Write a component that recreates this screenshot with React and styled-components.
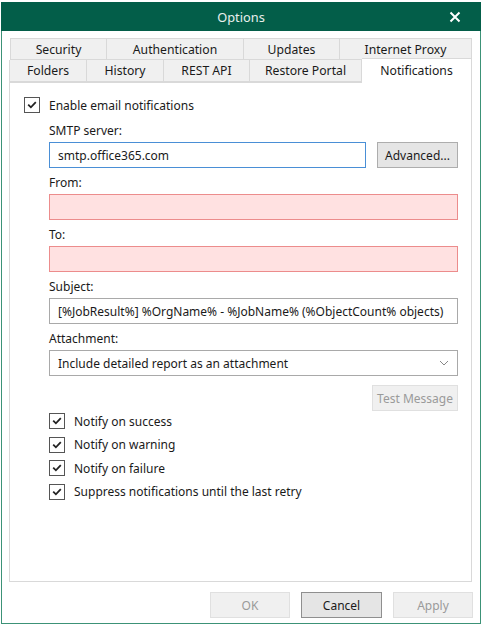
import React from 'react';
import styled, { createGlobalStyle } from 'styled-components';

const Global = createGlobalStyle`
  html, body { margin: 0; padding: 0; background: #fff; }
  body {
    font-family: "Noto Sans", "Open Sans", sans-serif;
    font-size: 12px;
    color: #1a1a1a;
  }
  * { box-sizing: border-box; }
`;

const Window = styled.div`
  margin: 2px 0 0 1px;
  width: 480px;
  height: 622px;
  border: 1px solid #3c9277;
  border-top: none;
  display: flex;
  flex-direction: column;
  background: #fff;
`;

const TitleBar = styled.div`
  height: 29px;
  margin: 0 -1px;
  background: #035e49;
  display: grid;
  grid-template-columns: 1fr auto 1fr;
  align-items: center;
  color: #e9efed;
  font-size: 12.8px;
`;

const Title = styled.div`
  grid-column: 2;
`;

const Close = styled.div`
  grid-column: 3;
  justify-self: end;
  margin-right: 20px;
  display: flex;
  align-items: center;
`;

const Body = styled.div`
  padding: 7px 7px 0 7px;
  display: flex;
  flex-direction: column;
`;

const TabRow = styled.div`
  display: flex;
  height: 22px;
  margin-left: ${p => p.$indent || 0}px;
`;

const Tab = styled.div`
  width: ${p => p.$w}px;
  height: 22px;
  background: #f0f0f0;
  border: 1px solid #d9d9d9;
  border-left: ${p => (p.$first ? '1px solid #d9d9d9' : 'none')};
  border-top: ${p => (p.$noTop ? 'none' : '1px solid #d9d9d9')};
  display: flex;
  align-items: center;
  justify-content: center;
  font-size: 12.2px;
  color: #1a1a1a;
  white-space: nowrap;
`;

const ActiveTab = styled(Tab)`
  position: relative;
  z-index: 1;
  background: #fff;
  height: 25px;
  margin-top: -2px;
  border-top: 1px solid #d9d9d9;
  border-bottom: none;
  padding-bottom: 2px;
`;

const Panel = styled.div`
  width: 463px;
  height: 500px;
  border: 1px solid #d9d9d9;
  padding: 14px 13px 0 14px;
  display: flex;
  flex-direction: column;
`;

const CheckRow = styled.label`
  display: flex;
  align-items: center;
  height: 16px;
  gap: 9px;
  font-size: 12px;
  white-space: nowrap;
`;

const Box = styled.span`
  width: 16px;
  height: 16px;
  border: 1px solid #555;
  background: #fff;
  display: flex;
  align-items: center;
  justify-content: center;
  flex: none;
`;

const Fields = styled.div`
  margin-top: 3px;
  padding-left: 25px;
  display: flex;
  flex-direction: column;
`;

const Label = styled.div`
  height: 26px;
  padding-top: 7px;
  line-height: 16px;
  font-size: 12px;
`;

const Input = styled.div`
  flex: none;
  height: 26px;
  padding: 0 0 0 8px;
  display: flex;
  align-items: center;
  font-size: 12px;
  white-space: nowrap;
  overflow: hidden;
  background: ${p => (p.$error ? '#ffe1e1' : '#fff')};
  border: 1px solid
    ${p => (p.$focus ? '#4a8fd6' : p.$error ? '#ec8c8c' : '#a9a9a9')};
`;

const InputRow = styled.div`
  display: flex;
  gap: 11px;
  & > ${Input} {
    flex: 1;
  }
`;

const Select = styled(Input)`
  justify-content: space-between;
  padding-right: 8px;
`;

const Button = styled.div`
  flex: none;
  width: ${p => p.$w}px;
  height: 26px;
  display: flex;
  align-items: center;
  justify-content: center;
  font-size: 12px;
  white-space: nowrap;
  background: ${p => (p.$disabled ? '#f0f0f0' : '#e5e5e5')};
  color: ${p => (p.$disabled ? '#9a9a9a' : '#1a1a1a')};
  border: 1px solid ${p => (p.$disabled ? '#e0e0e0' : p.$default ? '#8f8f8f' : '#adadad')};
`;

const TestRow = styled.div`
  display: flex;
  justify-content: flex-end;
  margin-top: 9px;
`;

const Checks = styled.div`
  margin-top: 2px;
  display: flex;
  flex-direction: column;
  gap: 7.67px;
`;

const ButtonBar = styled.div`
  display: flex;
  justify-content: flex-end;
  gap: 11px;
  margin-top: 10px;
`;

const Check = () => (
  <svg width="12" height="12" viewBox="0 0 12 12">
    <path d="M2.2 5.6 L4.9 8.3 L9.8 3.2" fill="none" stroke="#222" strokeWidth="1.8" />
  </svg>
);

const CheckItem = ({ children }) => (
  <CheckRow>
    <Box>
      <Check />
    </Box>
    {children}
  </CheckRow>
);

export default function App() {
  return (
    <>
      <Global />
      <Window>
        <TitleBar>
          <Title>Options</Title>
          <Close>
            <svg width="12" height="12" viewBox="0 0 12 12">
              <path d="M1.5 1.5 L10.5 10.5 M10.5 1.5 L1.5 10.5" stroke="#fff" strokeWidth="2" />
            </svg>
          </Close>
        </TitleBar>
        <Body>
          <TabRow $indent={1}>
            <Tab $w={97} $first>Security</Tab>
            <Tab $w={137}>Authentication</Tab>
            <Tab $w={96}>Updates</Tab>
            <Tab $w={132}>Internet Proxy</Tab>
          </TabRow>
          <TabRow>
            <Tab $w={78} $first $noTop>Folders</Tab>
            <Tab $w={77} $noTop>History</Tab>
            <Tab $w={86} $noTop>REST API</Tab>
            <Tab $w={112} $noTop>Restore Portal</Tab>
            <ActiveTab $w={110}>Notifications</ActiveTab>
          </TabRow>
          <Panel>
            <CheckItem>Enable email notifications</CheckItem>
            <Fields>
              <Label>SMTP server:</Label>
              <InputRow>
                <Input $focus>smtp.office365.com</Input>
                <Button $w={81}>Advanced...</Button>
              </InputRow>
              <Label>From:</Label>
              <Input $error />
              <Label>To:</Label>
              <Input $error />
              <Label>Subject:</Label>
              <Input>[%JobResult%] %OrgName% - %JobName% (%ObjectCount% objects)</Input>
              <Label>Attachment:</Label>
              <Select>
                <span>Include detailed report as an attachment</span>
                <svg width="10" height="6" viewBox="0 0 10 6">
                  <path d="M1 1 L5 5 L9 1" fill="none" stroke="#888" strokeWidth="1" />
                </svg>
              </Select>
              <TestRow>
                <Button $w={86} $disabled>Test Message</Button>
              </TestRow>
              <Checks>
                <CheckItem>Notify on success</CheckItem>
                <CheckItem>Notify on warning</CheckItem>
                <CheckItem>Notify on failure</CheckItem>
                <CheckItem>Suppress notifications until the last retry</CheckItem>
              </Checks>
            </Fields>
          </Panel>
          <ButtonBar>
            <Button $w={80} $disabled>OK</Button>
            <Button $w={81} $default>Cancel</Button>
            <Button $w={80} $disabled>Apply</Button>
          </ButtonBar>
        </Body>
      </Window>
    </>
  );
}
